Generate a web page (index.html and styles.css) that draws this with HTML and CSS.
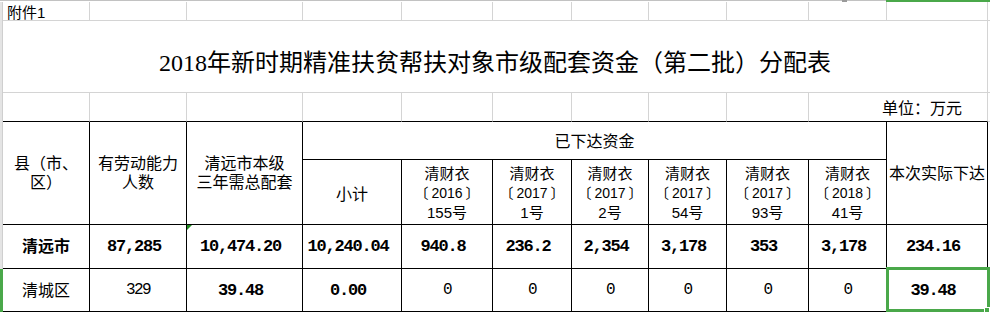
FILE: index.html
```html
<!DOCTYPE html>
<html lang="zh-CN">
<head>
<meta charset="utf-8">
<title>2018年新时期精准扶贫帮扶对象市级配套资金（第二批）分配表</title>
<link rel="stylesheet" href="styles.css">
</head>
<body>
<div class="sheet">
  <div class="hdr-line"></div>
  <div class="hdr-mark"></div>
  <div class="hdr-sel"></div>
  <div class="gutter"></div>
  <div class="gutter-sel"></div>

  <!-- row: 附件1 -->
  <div class="g note">附件1</div>
  <div class="g"></div><div class="g"></div><div class="g"></div><div class="g"></div><div class="g"></div>
  <div class="g"></div><div class="g"></div><div class="g"></div><div class="g"></div><div class="g"></div>
  <div class="gb"></div>

  <!-- row: title -->
  <div class="g title">2018年新时期精准扶贫帮扶对象市级配套资金（第二批）分配表</div>
  <div class="gb"></div>

  <!-- row: unit -->
  <div class="g k"></div><div class="g k"></div><div class="g k"></div><div class="g k"></div><div class="g k"></div>
  <div class="g k"></div><div class="g k"></div><div class="g k"></div><div class="g k"></div>
  <div class="g k unit">单位：万元</div>
  <div class="gb"></div>

  <!-- table header -->
  <div class="c rs2"><span>县（市、<br>区）</span></div>
  <div class="c rs2"><span>有劳动能力<br>人数</span></div>
  <div class="c rs2"><span>清远市本级<br>三年需总配套</span></div>
  <div class="c cs7">已下达资金</div>
  <div class="c rs2">本次实际下达</div>
  <div class="fill"></div>

  <div class="c sub">小计</div>
  <div class="c doc"><span>清财衣<br><span class="yr">〔<span class="yn">2016</span>〕</span><br>155号</span></div>
  <div class="c doc"><span>清财衣<br><span class="yr">〔<span class="yn">2017</span>〕</span><br>1号</span></div>
  <div class="c doc"><span>清财衣<br><span class="yr">〔<span class="yn">2017</span>〕</span><br>2号</span></div>
  <div class="c doc"><span>清财衣<br><span class="yr">〔<span class="yn">2017</span>〕</span><br>54号</span></div>
  <div class="c doc"><span>清财衣<br><span class="yr">〔<span class="yn">2017</span>〕</span><br>93号</span></div>
  <div class="c doc"><span>清财衣<br><span class="yr">〔<span class="yn">2018</span>〕</span><br>41号</span></div>

  <!-- data row 1 -->
  <div class="c name bold">清远市</div>
  <div class="c nb">87,285</div>
  <div class="c nb flag">10,474.20</div>
  <div class="c nb">10,240.04</div>
  <div class="c nb">940.8</div>
  <div class="c nb">236.2</div>
  <div class="c nb">2,354</div>
  <div class="c nb">3,178</div>
  <div class="c nb">353</div>
  <div class="c nb">3,178</div>
  <div class="c nb">234.16</div>

  <!-- data row 2 -->
  <div class="c name">清城区</div>
  <div class="c nr">329</div>
  <div class="c nb">39.48</div>
  <div class="c nb">0.00</div>
  <div class="c nr">0</div>
  <div class="c nr">0</div>
  <div class="c nr">0</div>
  <div class="c nr">0</div>
  <div class="c nr">0</div>
  <div class="c nr">0</div>
  <div class="c nb selected">39.48</div>
</div>
</body>
</html>
```

FILE: styles.css
```css
html, body {
  margin: 0;
  padding: 0;
  background: #ffffff;
}

body {
  width: 990px;
  height: 312px;
  overflow: hidden;
  font-family: "Liberation Sans", "Noto Sans CJK SC", sans-serif;
  color: #000000;
}

.sheet {
  display: grid;
  grid-template-columns: 3px 87px 97px 116px 99px 91px 79px 77px 78px 82px 78px 101px 2px;
  grid-template-rows: 2px 19px 72px 29px 38px 65px 44px 43px;
  width: 990px;
  height: 312px;
}

.sheet > div {
  box-sizing: border-box;
  min-width: 0;
}

/* spreadsheet chrome */
.hdr-line {
  grid-column: 1 / -1;
  grid-row: 1;
  border-top: 1px solid #c2c2c2;
}

.hdr-mark {
  grid-column: 11;
  grid-row: 1;
  justify-self: start;
  margin-left: 33px;
  width: 5px;
  height: 2px;
  background: #9a9a9a;
}

.hdr-sel {
  grid-column: 12 / 14;
  grid-row: 1;
  margin-left: -1px;
  background: #4aa84a;
}

.gutter {
  grid-column: 1;
  grid-row: 2 / 8;
  background: #e4e4e4;
  border-right: 1px solid #cfcfcf;
}

.gutter-sel {
  grid-column: 1;
  grid-row: 8;
  background: #4aa84a;
}

/* gray grid cells */
.g {
  border-right: 1px solid #d4d4d4;
  border-bottom: 1px solid #d4d4d4;
}

.gb {
  border-bottom: 1px solid #d4d4d4;
}

.g.k {
  border-bottom-color: #000000;
}

.note {
  display: flex;
  align-items: center;
  padding-left: 4px;
  font-size: 15px;
  white-space: nowrap;
}

.title {
  grid-column: 2 / 13;
  display: flex;
  align-items: center;
  justify-content: center;
  padding-top: 7px;
  font-family: "Liberation Serif", "Noto Sans CJK SC", serif;
  font-size: 24px;
  white-space: nowrap;
}

.unit {
  grid-column: span 2;
  display: flex;
  align-items: center;
  justify-content: flex-end;
  padding-right: 25px;
  font-size: 16px;
  white-space: nowrap;
}

/* table cells */
.c {
  border-right: 1px solid #000000;
  border-bottom: 1px solid #000000;
  display: flex;
  align-items: center;
  justify-content: center;
  text-align: center;
  font-size: 16px;
  line-height: 19px;
  white-space: nowrap;
}

.rs2 {
  grid-row: span 2;
}

.cs7 {
  grid-column: span 7;
  padding-top: 2px;
}

.fill {
  grid-row: span 4;
}

.sub {
  padding-top: 4px;
}

.doc {
  font-size: 15px;
  padding-top: 2px;
}

.yr {
  font-size: 14px;
  font-feature-settings: "halt";
}

.yn {
  margin: 0 3px;
}

.name {
  font-size: 16px;
}

.bold {
  font-weight: 700;
}

.nb {
  font-family: "Liberation Mono", monospace;
  font-weight: 700;
  font-size: 17px;
  letter-spacing: -1.2px;
  padding-right: 8px;
}

.nr {
  font-family: "Liberation Mono", monospace;
  font-size: 16px;
  letter-spacing: -1.6px;
}

.flag {
  position: relative;
}

.flag::before {
  content: "";
  position: absolute;
  left: 0;
  top: 0;
  width: 0;
  height: 0;
  border-top: 5px solid #1f8a1f;
  border-right: 5px solid transparent;
}

.selected {
  position: relative;
}

.selected::after {
  content: "";
  position: absolute;
  left: -1px;
  top: -2px;
  width: 104px;
  height: 45px;
  box-sizing: border-box;
  border: 3px solid #4aa84a;
}

.selected::before {
  content: "";
  position: absolute;
  left: 97px;
  top: 38px;
  width: 6px;
  height: 6px;
  box-sizing: border-box;
  background: #4aa84a;
  border: 1px solid #ffffff;
  z-index: 1;
}
```
